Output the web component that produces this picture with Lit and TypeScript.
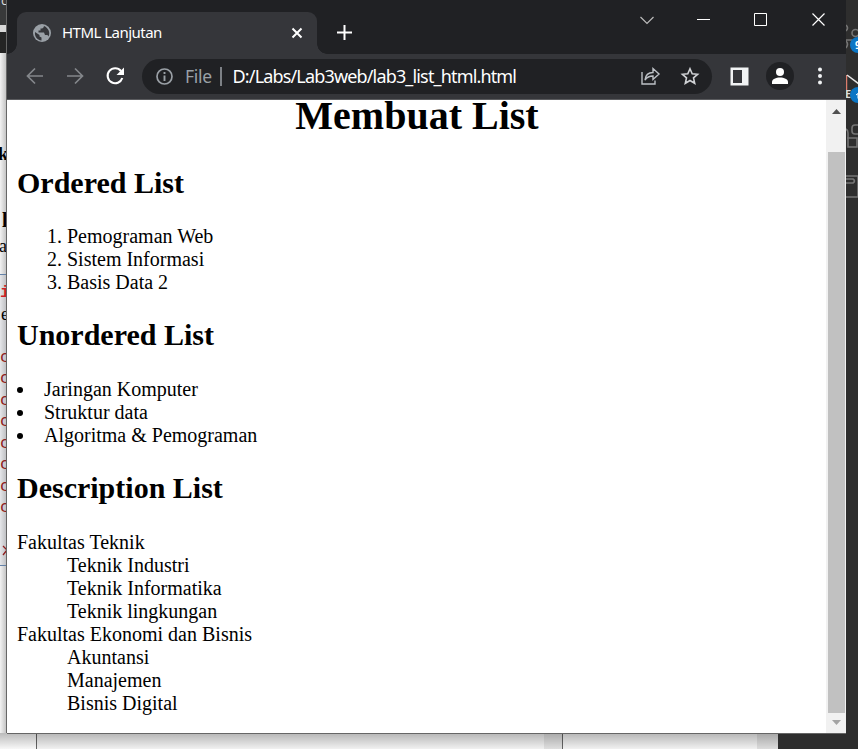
import { LitElement, html, css, svg } from "lit";
import { customElement } from "lit/decorators.js";

@customElement("back-desktop")
class BackDesktop extends LitElement {
  static styles = css`
    :host { position: absolute; inset: 0; overflow: hidden; background: #2e2e2e; }
    svg { display: block; }
    .serif { font-family: "Liberation Serif", serif; }
    .mono { font-family: "Liberation Mono", monospace; }
    .sans { font-family: "Open Sans", sans-serif; }
  `;
  private marks = [357, 378, 400, 421, 443, 464, 486, 507];
  render() {
    return html`<svg width="858" height="749" viewBox="0 0 858 749">
      <defs>
        <linearGradient id="side"><stop offset="0" stop-color="#f2f2f2"/><stop offset="1" stop-color="#bdbdbd"/></linearGradient>
        <linearGradient id="under" x2="0" y2="1"><stop offset="0" stop-color="#000" stop-opacity=".27"/><stop offset="1" stop-color="#000" stop-opacity=".03"/></linearGradient>
      </defs>
      <rect width="7" height="25" fill="#38393a"/>
      <rect y="25" width="7" height="7" fill="#d9d9d9"/>
      <rect y="32" width="7" height="21" fill="#242424"/>
      <rect y="53" width="7" height="680" fill="url(#side)"/>
      <rect y="274" width="7" height="291" fill="#aab4c4" fill-opacity=".18"/>
      <path d="M0 274.5h7M0 565.5h7" stroke="#6482a8"/>
      <text class="sans" x="1" y="5" font-size="13" fill="#ddd">c</text>
      <text class="serif" x="-2" y="160" font-size="18" font-weight="700">k</text>
      <text class="serif" x="2" y="227" font-size="20" font-weight="700">l</text>
      <text class="serif" x="-1" y="252" font-size="18">a</text>
      <text class="mono" x="0" y="297" font-size="17" font-weight="700" fill="#cf2027">i</text>
      <text class="serif" x="1" y="320" font-size="18">e</text>
      ${this.marks.map((y) => svg`<text class="mono" x="0" y=${y + 5} font-size="17" fill="#8f1d1d">c</text>`)}
      <path d="M3 546l4 4-4 5" stroke="#8f1d1d" stroke-width="1.300" fill="none"/>
      <rect y="733" width="36" height="16" fill="#fff"/>
      <rect x="36" y="733" width="742" height="16" fill="#f8f8f8"/>
      <rect x="544" y="733" width="18" height="16" fill="#e6e6e6"/>
      <rect x="757" y="733" width="21" height="16" fill="#e3e3e3"/>
      <path d="M36.5 733v16M562.5 733v16" stroke="#666"/>
      <rect y="733" width="778" height="16" fill="url(#under)"/>
      <g fill="none" stroke="#757575" stroke-width="1.600">
        <path d="M846 25q3 3 0 6M846 40h6M846 41q3 3 0 7"/><circle cx="855.5" cy="33" r="3.500"/>
        <path d="M846 129q2 1 2 4v14h9v-9h-10M860 125h-5q-3 0-3 3v3q0 3 3 3h5"/>
        <path d="M846 176h12v21h-12M846 179h7q3 2 0 4h-7"/>
      </g>
      <path d="M846.5 75v15" stroke="#db7c6c" stroke-width="1.500"/><path d="M847 75l12 9" stroke="#e5e5e5" stroke-width="1.500"/>
      <text class="sans" x="845" y="98" font-size="11" font-weight="700" fill="#ddd">E</text>
      <circle cx="858" cy="45" r="8" fill="#0b76c5"/><circle cx="858" cy="95" r="8" fill="#0b76c5"/>
      <text class="sans" x="855" y="49" font-size="10" font-weight="700" fill="#fff">9</text>
      <path d="M856 95l2-1.500v5" stroke="#fff" fill="none"/>
    </svg>`;
  }
}

@customElement("browser-chrome")
class BrowserChrome extends LitElement {
  static styles = css`
    :host { display: block; font-family: "Noto Sans", "Open Sans", sans-serif; color: #fff; }
    svg { display: block; flex: none; overflow: visible; fill: none; }
    .tabs { display: flex; height: 54px; background: #202124; }
    .tab { box-sizing: border-box; position: relative; width: 300px; margin: 12px 0 0 10px; padding: 0 14px 0 16px; height: 42px; background: #35363a; border-radius: 9px 9px 0 0; display: flex; align-items: center; }
    .tab::before, .tab::after { content: ""; position: absolute; bottom: 0; width: 10px; height: 10px; }
    .tab::before { left: -10px; background: radial-gradient(circle at 0 0, transparent 9.5px, #35363a 10px); }
    .tab::after { right: -10px; background: radial-gradient(circle at 100% 0, transparent 9.5px, #35363a 10px); }
    .name { margin: 0 0 2px 11px; flex: 1; font-size: 15px; line-height: 20px; white-space: nowrap; letter-spacing: -0.52px; }
    .plus { margin: 25px 0 0 20px; }
    .controls { display: flex; margin: 13px 21px 0 auto; align-items: flex-start; height: 14px; gap: 44px; }
    .bar { display: flex; align-items: center; height: 46px; padding-bottom: 1px; background: #35363a; box-sizing: border-box; border-bottom: 1px solid #5a5b5e; }
    .nav { display: flex; gap: 22px; width: 135px; padding-left: 19px; box-sizing: border-box; }
    .omni { display: flex; align-items: center; width: 570px; height: 35px; border-radius: 18px; background: #202124; box-sizing: border-box; padding: 0 13px 0 14px; font-size: 18px; line-height: 24px; }
    .file { margin-left: 12px; color: #9aa0a6; width: 27px; font-size: 17.5px; letter-spacing: -0.3px; }
    .sep { width: 1.5px; height: 19px; background: #7d8186; margin: 0 11px 0 8px; }
    .url { flex: 1; white-space: nowrap; letter-spacing: -0.84px; }
    .acts { display: flex; gap: 21px; }
    .tools { display: flex; align-items: center; margin-left: 18px; }
    .user { margin-left: 17px; }
    .more { margin-left: 23.5px; }
  `;
  render() {
    return html`
      <div class="tabs">
        <div class="tab">
          <svg width="18" height="18" viewBox="0 0 18 18"><circle cx="9" cy="9" r="9" fill="#9aa0a6"/><path d="M2 8l4.500 3v1.500l2 1v3C4 16 1.500 12.500 2 8zM11 2c-.5 2-1 2.500-3.500 2.500V6.500H5.500v2h5.500l1 2.500h2.500l1 1.500c2-4 0-8.500-4.500-10.500z" fill="#35363a"/></svg>
          <div class="name">HTML Lanjutan</div>
          <svg width="12" height="12" viewBox="0 0 12 12"><path d="M1.500 1.500l9 9m0-9l-9 9" stroke="#fff" stroke-width="2"/></svg>
        </div>
        <svg class="plus" width="15" height="15" viewBox="0 0 15 15"><path d="M7.500 0v15M0 7.500h15" stroke="#fff" stroke-width="2"/></svg>
        <div class="controls">
          <svg width="14" height="14" viewBox="0 0 14 14"><path d="M.5 4L7 10.500 13.500 4" stroke="#bbb" stroke-width="1.200"/></svg>
          <svg width="13" height="14" viewBox="0 0 13 14"><path d="M-1 6.500h13" stroke="#fff"/></svg>
          <svg width="13" height="14" viewBox="0 0 13 14"><path d="M-.5.500h12v12h-12z" stroke="#fff"/></svg>
          <svg width="13" height="14" viewBox="0 0 13 14"><path d="M.5.500l12 12m0-12l-12 12" stroke="#fff" stroke-width="1.200"/></svg>
        </div>
      </div>
      <div class="bar">
        <div class="nav">
          <svg width="18" height="18" viewBox="0 0 18 18"><path d="M17 9H2M9 1.500L1.500 9 9 16.500" stroke="#84878b" stroke-width="1.700"/></svg>
          <svg width="18" height="18" viewBox="0 0 18 18"><path d="M1 9h15M9 1.500L16.500 9 9 16.500" stroke="#84878b" stroke-width="1.700"/></svg>
          <svg width="18" height="18" viewBox="0 0 18 18"><path d="M15 4A7.500 7.500 0 1 0 16.300 11" stroke="#fff" stroke-width="2.100"/><path d="M18 .5v7.500h-7.500z" fill="#fff"/></svg>
        </div>
        <div class="omni">
          <svg width="17" height="17" viewBox="0 0 17 17"><circle cx="8.500" cy="8.500" r="7.500" stroke="#9aa0a6" stroke-width="1.700"/><path d="M8.500 4v2M8.500 7.500v5.500" stroke="#9aa0a6" stroke-width="1.900"/></svg>
          <span class="file">File</span><span class="sep"></span><span class="url">D:/Labs/Lab3web/lab3_list_html.html</span>
          <div class="acts">
            <svg width="19" height="18" viewBox="0 0 19 18"><path d="M1 5v12h13v-3.500M4 13C4.500 8 7 5.500 12 5.500V1.500l6 5.500-6 5.500V9C8.500 9 6 10 4 13z" stroke="#bdc1c6" stroke-width="1.400"/></svg>
            <svg width="18" height="18" viewBox="0 0 18 18"><path d="M9 1.800l2.200 5 5.400.5-4.100 3.600 1.200 5.400L9 13.500l-4.700 2.800 1.200-5.400L1.400 7.300l5.400-.5z" stroke="#d0d2d5" stroke-width="1.600"/></svg>
          </div>
        </div>
        <div class="tools">
          <svg width="19" height="19" viewBox="0 0 19 19"><path d="M.5.500h18v18H.5zM3 3v13h9V3z" fill="#f1f3f4" fill-rule="evenodd"/></svg>
          <svg class="user" width="28" height="28" viewBox="0 0 28 28"><circle cx="14" cy="14" r="14" fill="#202124"/><circle cx="14" cy="10" r="4" fill="#fff"/><path d="M6 22v-2c0-3 4-4.500 8-4.500s8 1.500 8 4.500v2z" fill="#fff"/></svg>
          <svg class="more" width="4" height="18" viewBox="0 0 4 18"><g fill="#f1f3f4"><circle cx="2" cy="2.500" r="2"/><circle cx="2" cy="9" r="2"/><circle cx="2" cy="15.500" r="2"/></g></svg>
        </div>
      </div>`;
  }
}

@customElement("list-page")
class ListPage extends LitElement {
  static styles = css`
    :host { display: flex; height: 633px; background: #fff; color: #000; overflow: hidden; }
    .doc { flex: 1; padding: 0 9px 0 10px; font: 20px/23px "Liberation Serif", serif; }
    h1 { font-size: 40px; line-height: 46px; margin: -7px 0 27px; text-align: center; }
    h2 { font-size: 30px; line-height: 34px; margin: 24px 0 26px; }
    h2.first { margin-bottom: 25px; }
    ol, ul, dl { margin: 0; }
    ol { padding-left: 50px; }
    ul { padding-left: 0; list-style-position: inside; }
    dd { margin-left: 50px; }
    .scroll { width: 20px; background: #f1f1f1; display: flex; flex-direction: column; align-items: flex-start; }
    .thumb { width: 17px; height: 561px; margin-left: 2px; background: #c1c1c1; }
    .up { height: 52px; } .down { height: 20px; }
    .up svg, .down svg { display: block; margin-left: 6px; }
  `;
  private rows(items: string[]) { return items.map((t) => html`<li>${t}</li>`); }
  render() {
    return html`
      <div class="doc">
        <h1>Membuat List</h1>
        <h2 class="first">Ordered List</h2>
        <ol>${this.rows(["Pemograman Web", "Sistem Informasi", "Basis Data 2"])}</ol>
        <h2>Unordered List</h2>
        <ul>${this.rows(["Jaringan Komputer", "Struktur data", "Algoritma & Pemograman"])}</ul>
        <h2>Description List</h2>
        <dl>
          <dt>Fakultas Teknik</dt>
          <dd>Teknik Industri</dd><dd>Teknik Informatika</dd><dd>Teknik lingkungan</dd>
          <dt>Fakultas Ekonomi dan Bisnis</dt>
          <dd>Akuntansi</dd><dd>Manajemen</dd><dd>Bisnis Digital</dd>
        </dl>
      </div>
      <div class="scroll">
        <div class="up"><svg width="9" height="20"><path d="M0 14l4.500-5L9 14z" fill="#505050"/></svg></div>
        <div class="thumb"></div>
        <div class="down"><svg width="9" height="20"><path d="M0 7h9l-4.500 5z" fill="#a3a3a3"/></svg></div>
      </div>`;
  }
}

@customElement("app-root")
class AppRoot extends LitElement {
  static styles = css`
    :host { display: block; position: relative; width: 858px; height: 749px; overflow: hidden; }
    .window { position: relative; width: 839px; height: 733px; margin-left: 7px; box-shadow: -1px 0 #666, 0 1px #666; }
  `;
  render() {
    return html`<back-desktop></back-desktop>
      <div class="window"><browser-chrome></browser-chrome><list-page></list-page></div>`;
  }
}
